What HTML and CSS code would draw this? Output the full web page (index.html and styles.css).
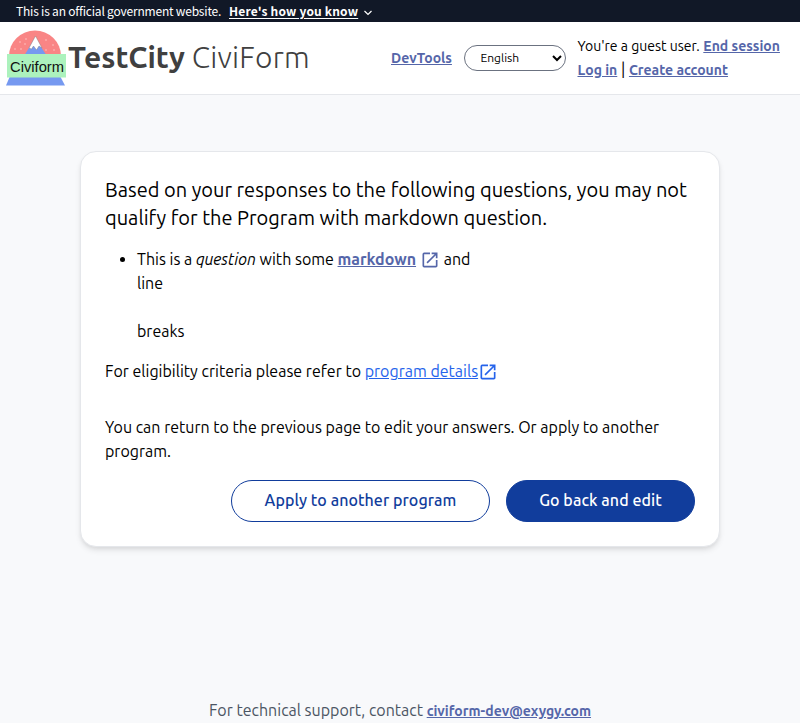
FILE: index.html
```
<!DOCTYPE html>
<html lang="en">
<head>
<meta charset="utf-8">
<title>TestCity CiviForm</title>
<link rel="stylesheet" href="styles.css">
</head>
<body>
<div class="banner"><span class="banner-text">This is an official government website.</span><a class="banner-link">Here's how you know</a><svg class="chevron" width="8" height="6" viewBox="0 0 8 6"><path d="M.5 1l3.500 3.500L7.500 1" fill="none" stroke="#fff" stroke-width="1.2"/></svg></div>
<header class="header">
  <div class="brand">
    <svg class="logo" width="62" height="58" viewBox="0 0 62 58">
      <path d="M4 26a26 25.500 0 0 1 52 0z" fill="#f98585"/>
      <path d="M19 26L30 8l12 18z" fill="#7699f0"/>
      <path d="M24 18L30.500 6l6.500 12-3-2-2.500 4-3-4-2 3z" fill="#fff" stroke="#777" stroke-width=".4"/>
      <g fill="#ffd3d0"><circle cx="15" cy="12" r=".7"/><circle cx="21" cy="9" r=".7"/><circle cx="20" cy="14" r=".7"/><circle cx="10" cy="19" r=".7"/><circle cx="16" cy="19" r=".7"/><circle cx="41" cy="10" r=".7"/><circle cx="48" cy="15" r=".7"/><circle cx="41" cy="20" r=".7"/><circle cx="49" cy="20" r=".7"/></g>
      <path d="M5 46h50l5 9.500H1z" fill="#7699f0"/>
      <path d="M2 24h59v23.500H2z" fill="#acf2bd"/>
      <text class="logo-text" x="5" y="41.500" textLength="54" lengthAdjust="spacingAndGlyphs">Civiform</text>
    </svg>
    <h1 class="title"><b>TestCity</b> <span class="product">CiviForm</span></h1>
  </div>
  <a class="link devtools">DevTools</a>
  <select class="language"><option>English</option></select>
  <div class="account">
    <div><span class="guest">You're a guest user.</span> <a class="link">End session</a></div>
    <div class="sign-in"><a class="link">Log in</a> | <a class="link">Create account</a></div>
  </div>
</header>
<main class="card">
  <h2 class="heading">Based on your responses to the following questions, you may not qualify for the Program with markdown question.</h2>
  <ul class="list"><li>This is a <em>question</em> with some <a class="link markdown">markdown<svg class="icon icon-md" width="20" height="20" viewBox="0 0 24 24"><path fill="#5566a9" d="M19 19H5V5h7V3H5a2 2 0 0 0-2 2v14a2 2 0 0 0 2 2h14c1.100 0 2-.9 2-2v-7h-2v7zM14 3v2h3.590l-9.830 9.830 1.410 1.410L19 6.410V10h2V3h-7z"/></svg></a> and<br>line<br><br>breaks</li></ul>
  <p class="criteria">For eligibility criteria please refer to <a class="details">program details<svg class="icon" width="20" height="20" viewBox="0 0 24 24"><path fill="#2563eb" d="M19 19H5V5h7V3H5a2 2 0 0 0-2 2v14a2 2 0 0 0 2 2h14c1.100 0 2-.9 2-2v-7h-2v7zM14 3v2h3.590l-9.830 9.830 1.410 1.410L19 6.410V10h2V3h-7z"/></svg></a></p>
  <p class="return">You can return to the previous page to edit your answers. Or apply to another program.</p>
  <div class="actions"><a class="button outline">Apply to another program</a><a class="button solid">Go back and edit</a></div>
</main>
<footer class="footer">For technical support, contact <a class="link">civiform-dev@exygy.com</a></footer>
</body>
</html>
```
FILE: styles.css
```
* { box-sizing: border-box; }
body { margin: 0; height: 723px; overflow: hidden; display: flex; flex-direction: column; background: #f8f9fb; color: #000; font: 16px/24px Ubuntu, "Noto Sans", sans-serif; }
h1, h2, p, ul { margin: 0; font-weight: 400; }
.banner { height: 22px; flex: none; padding-left: 16px; display: flex; align-items: center; white-space: nowrap; background: #111827; color: #fff; font: 12px/24px "Noto Sans CJK SC", sans-serif; }
.banner-text { width: 213px; letter-spacing: -.2px; }
.banner-link { width: 129px; letter-spacing: .17px; font-weight: 700; text-decoration: underline; text-underline-offset: 2px; }
.chevron { margin-left: 6px; margin-top: 3px; }
.header { height: 73px; flex: none; padding-left: 5px; display: flex; align-items: center; white-space: nowrap; background: #fff; border-bottom: 1px solid #e5e7eb; }
.brand { display: flex; align-items: center; width: 386px; }
.logo { flex: none; margin-top: 1px; }
.logo-text { font: 14px "Liberation Sans", sans-serif; fill: #111; }
.title { margin: 0 0 2px 1px; font-size: 30px; line-height: 36px; color: #404040; }
.product { font-weight: 300; letter-spacing: .2px; }
.link { color: #5566a9; font-size: 14px; font-weight: 600; text-decoration: underline; }
.devtools { width: 73px; }
.language { width: 102px; height: 26px; border: 1px solid #6b7280; border-radius: 13px; padding: 0 0 1px 11.5px; background: #fff; color: #000; font: 12px Ubuntu, "Noto Sans", sans-serif; }
.account { margin: 0 0 2px 11.5px; }
.guest { font-size: 14px; }
.sign-in { margin-top: -1px; }
.card { width: 640px; height: 396px; flex: none; margin: 56px auto 0; padding: 24px; background: #fff; border: 1px solid #e5e7eb; border-radius: 16px; box-shadow: 0 4px 6px -1px rgba(0,0,0,.1), 0 2px 4px -1px rgba(0,0,0,.06); }
.heading { font-size: 20px; line-height: 28px; }
.list { margin-top: 15px; padding-left: 32px; }
.markdown { font-size: 16px; }
.icon { display: inline-block; vertical-align: -3px; margin: -2px 0; }
.icon-md { margin-left: 4px; }
.criteria { margin-top: 16px; }
.details { color: #2563eb; text-decoration: underline; }
.return { margin-top: 32px; }
.actions { display: flex; justify-content: flex-end; gap: 16px; margin-top: 17px; }
.button { display: flex; align-items: center; justify-content: center; height: 42px; padding-bottom: 2px; border: 1px solid #113d9c; border-radius: 21px; color: #113d9c; font-weight: 500; letter-spacing: .06px; }
.outline { width: 259px; }
.solid { width: 189px; background: #113d9c; color: #fff; }
.footer { margin-top: 151px; text-align: center; color: #4b5563; }
```
